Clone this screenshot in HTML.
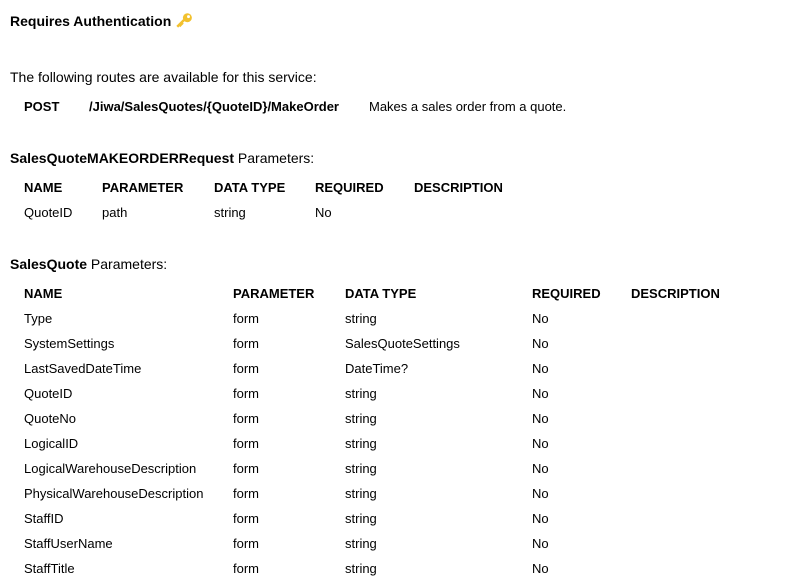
<!DOCTYPE html>
<html><head><style>
body{margin:0;width:799px;height:578px;background:#fff;font-family:"Liberation Sans",Arial,sans-serif;color:#000;position:relative;overflow:hidden}
div{position:absolute;white-space:nowrap;line-height:16px}
.b{font-weight:bold}
.s13{font-size:13px}
.s12{font-size:13px}
.s14{font-size:14px}
</style></head><body>
<div class="b s14" style="left:10px;top:12px">Requires Authentication <svg width="18" height="16" viewBox="0 0 16 14" style="vertical-align:-2px"><circle cx="11" cy="5" r="4" fill="#f2c12e"/><circle cx="12" cy="4" r="1.3" fill="#fff"/><path d="M8 7 L2 13 M4 11 L5.5 12.5 M5.5 9.5 L7 11" stroke="#f2c12e" stroke-width="2.2" fill="none"/></svg></div>
<div class="s14" style="left:10px;top:69px">The following routes are available for this service:</div>
<div class="b s12" style="left:24px;top:99px">POST</div>
<div class="b s12" style="left:89px;top:99px">/Jiwa/SalesQuotes/{QuoteID}/MakeOrder</div>
<div class="s12" style="left:369px;top:99px">Makes a sales order from a quote.</div>
<div class="s14" style="left:10px;top:150px"><b>SalesQuoteMAKEORDERRequest</b> Parameters:</div>
<div class="b s13" style="left:24px;top:180px">NAME</div>
<div class="b s13" style="left:102px;top:180px">PARAMETER</div>
<div class="b s13" style="left:214px;top:180px">DATA TYPE</div>
<div class="b s13" style="left:315px;top:180px">REQUIRED</div>
<div class="b s13" style="left:414px;top:180px">DESCRIPTION</div>
<div class="s13" style="left:24px;top:205px">QuoteID</div>
<div class="s13" style="left:102px;top:205px">path</div>
<div class="s13" style="left:214px;top:205px">string</div>
<div class="s13" style="left:315px;top:205px">No</div>
<div class="s14" style="left:10px;top:256px"><b>SalesQuote</b> Parameters:</div>
<div class="b s13" style="left:24px;top:286px">NAME</div>
<div class="b s13" style="left:233px;top:286px">PARAMETER</div>
<div class="b s13" style="left:345px;top:286px">DATA TYPE</div>
<div class="b s13" style="left:532px;top:286px">REQUIRED</div>
<div class="b s13" style="left:631px;top:286px">DESCRIPTION</div>
<div class="s13" style="left:24px;top:311px">Type</div><div class="s13" style="left:233px;top:311px">form</div><div class="s13" style="left:345px;top:311px">string</div><div class="s13" style="left:532px;top:311px">No</div>
<div class="s13" style="left:24px;top:336px">SystemSettings</div><div class="s13" style="left:233px;top:336px">form</div><div class="s13" style="left:345px;top:336px">SalesQuoteSettings</div><div class="s13" style="left:532px;top:336px">No</div>
<div class="s13" style="left:24px;top:361px">LastSavedDateTime</div><div class="s13" style="left:233px;top:361px">form</div><div class="s13" style="left:345px;top:361px">DateTime?</div><div class="s13" style="left:532px;top:361px">No</div>
<div class="s13" style="left:24px;top:386px">QuoteID</div><div class="s13" style="left:233px;top:386px">form</div><div class="s13" style="left:345px;top:386px">string</div><div class="s13" style="left:532px;top:386px">No</div>
<div class="s13" style="left:24px;top:411px">QuoteNo</div><div class="s13" style="left:233px;top:411px">form</div><div class="s13" style="left:345px;top:411px">string</div><div class="s13" style="left:532px;top:411px">No</div>
<div class="s13" style="left:24px;top:436px">LogicalID</div><div class="s13" style="left:233px;top:436px">form</div><div class="s13" style="left:345px;top:436px">string</div><div class="s13" style="left:532px;top:436px">No</div>
<div class="s13" style="left:24px;top:461px">LogicalWarehouseDescription</div><div class="s13" style="left:233px;top:461px">form</div><div class="s13" style="left:345px;top:461px">string</div><div class="s13" style="left:532px;top:461px">No</div>
<div class="s13" style="left:24px;top:486px">PhysicalWarehouseDescription</div><div class="s13" style="left:233px;top:486px">form</div><div class="s13" style="left:345px;top:486px">string</div><div class="s13" style="left:532px;top:486px">No</div>
<div class="s13" style="left:24px;top:511px">StaffID</div><div class="s13" style="left:233px;top:511px">form</div><div class="s13" style="left:345px;top:511px">string</div><div class="s13" style="left:532px;top:511px">No</div>
<div class="s13" style="left:24px;top:536px">StaffUserName</div><div class="s13" style="left:233px;top:536px">form</div><div class="s13" style="left:345px;top:536px">string</div><div class="s13" style="left:532px;top:536px">No</div>
<div class="s13" style="left:24px;top:561px">StaffTitle</div><div class="s13" style="left:233px;top:561px">form</div><div class="s13" style="left:345px;top:561px">string</div><div class="s13" style="left:532px;top:561px">No</div>
</body></html>
